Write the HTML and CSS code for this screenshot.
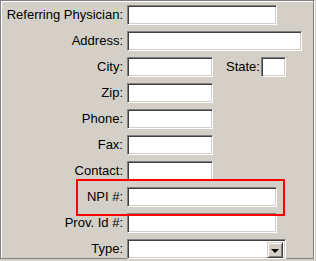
FILE: index.html
```html
<!DOCTYPE html>
<html lang="en">
<head>
    <meta charset="UTF-8">
    <title>Referring Physician</title>
    <link rel="stylesheet" href="styles.css">
</head>
<body>

    <div class="panel">
        <div class="form">
            <label class="label">Referring Physician:</label>
            <input type="text" class="field w150">

            <label class="label">Address:</label>
            <input type="text" class="field w175">

            <label class="label">City:</label>
            <div class="inline">
                <input type="text" class="field w86">
                <label class="state-label">State:</label>
                <input type="text" class="field w25">
            </div>

            <label class="label">Zip:</label>
            <input type="text" class="field w86">

            <label class="label">Phone:</label>
            <input type="text" class="field w86">

            <label class="label">Fax:</label>
            <input type="text" class="field w86">

            <label class="label">Contact:</label>
            <input type="text" class="field w86">

            <label class="label">NPI #:</label>
            <input type="text" class="field w150">

            <label class="label">Prov. Id #:</label>
            <input type="text" class="field w150">

            <label class="label">Type:</label>
            <div class="combo">
                <div class="combo-text"></div>
                <div class="combo-btn"><span class="arrow"></span></div>
            </div>

            <div class="highlight"></div>
        </div>
    </div>

</body>
</html>
```

FILE: styles.css
```css
* {
    box-sizing: border-box;
}

body {
    margin: 0;
    padding: 0;
    background-color: #d4d0c8;
    font-family: "Liberation Sans", Arial, sans-serif;
    font-size: 13px;
    color: #000;
}

.panel {
    width: 314px;
    height: 259px;
    border: 1px solid #808080;
    box-shadow: inset 1px 1px #fff, 1px 1px #fff;
}

.form {
    position: relative;
    display: grid;
    grid-template-columns: 122px auto;
    grid-auto-rows: 20px;
    column-gap: 4px;
    row-gap: 6px;
    align-items: center;
    justify-items: start;
    padding-top: 4px;
}

.label {
    justify-self: end;
    line-height: 20px;
    white-space: nowrap;
}

.field {
    height: 20px;
    margin: 0;
    padding: 0 2px;
    background: #fff;
    border-top: 1px solid #808080;
    border-left: 1px solid #808080;
    border-right: 1px solid #fff;
    border-bottom: 1px solid #fff;
    box-shadow: inset 1px 1px #404040, inset -1px -1px #d4d0c8;
    font: inherit;
    outline: none;
}

.w25 { width: 25px; }
.w86 { width: 86px; }
.w150 { width: 150px; }
.w175 { width: 175px; }

.inline {
    display: flex;
    align-items: center;
}

.state-label {
    margin-left: 13px;
    margin-right: 1px;
    line-height: 20px;
}

.combo {
    display: flex;
    width: 159px;
    height: 20px;
    padding: 2px;
    background: #fff;
    border-top: 1px solid #808080;
    border-left: 1px solid #808080;
    border-right: 1px solid #fff;
    border-bottom: 1px solid #fff;
    box-shadow: inset 1px 1px #404040, inset -1px -1px #d4d0c8;
}

.combo-text {
    flex: 1;
}

.combo-btn {
    width: 16px;
    height: 16px;
    display: flex;
    align-items: center;
    justify-content: center;
    background: #d4d0c8;
    border-top: 1px solid #d4d0c8;
    border-left: 1px solid #d4d0c8;
    border-right: 1px solid #404040;
    border-bottom: 1px solid #404040;
    box-shadow: inset 1px 1px #fff, inset -1px -1px #808080;
}

.arrow {
    width: 0;
    height: 0;
    border-left: 4px solid transparent;
    border-right: 4px solid transparent;
    border-top: 4px solid #000;
    margin-top: 1px;
}

.highlight {
    position: absolute;
    left: 75px;
    top: 178px;
    width: 209px;
    height: 37px;
    border: 2px solid #ff0000;
    pointer-events: none;
}
```
